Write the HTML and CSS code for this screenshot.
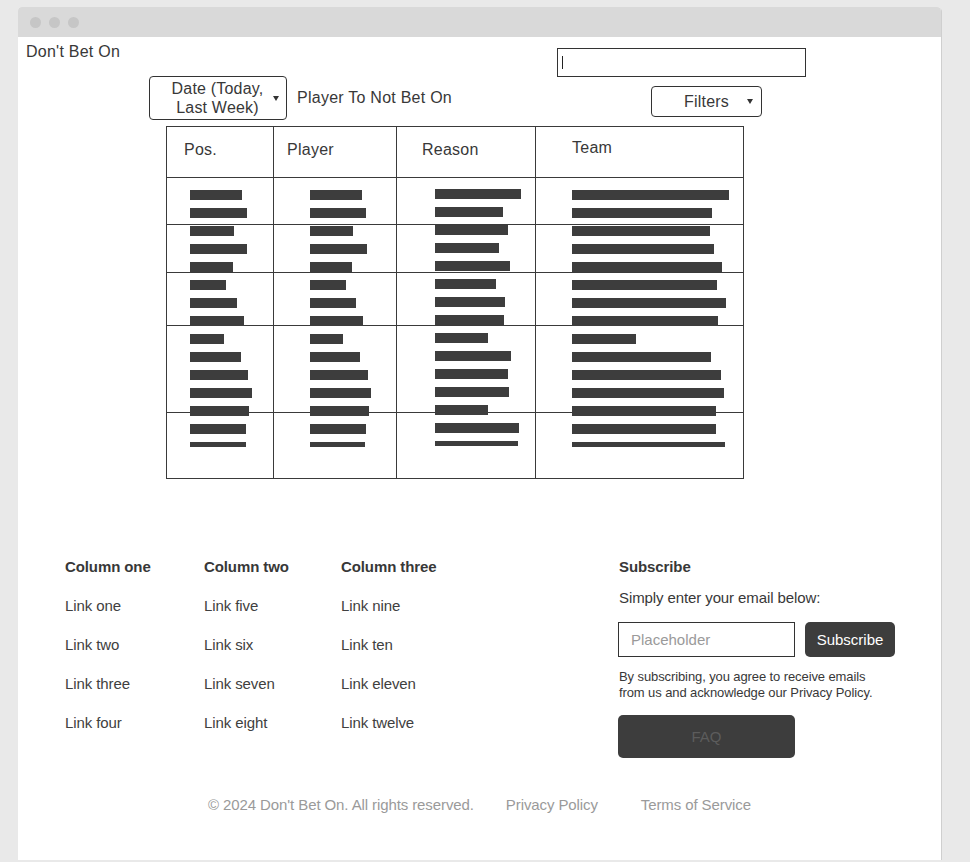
FILE: index.html
```html
<!DOCTYPE html>
<html lang="en">
<head>
  <meta charset="UTF-8">
  <title>Don't Bet On</title>
  <link rel="stylesheet" href="styles.css">
</head>
<body>
  <div class="window">
    <div class="titlebar">
      <span class="dot"></span>
      <span class="dot"></span>
      <span class="dot"></span>
    </div>

    <div class="top-row">
      <div class="brand">Don't Bet On</div>
      <div class="search"><span class="caret"></span></div>
    </div>

    <div class="filter-row">
      <div class="select date-select">
        <span class="select-text">Date (Today,<br>Last Week)</span>
        <span class="arrow"></span>
      </div>
      <div class="label">Player To Not Bet On</div>
      <div class="select filters-select">
        <span>Filters</span>
        <span class="arrow"></span>
      </div>
    </div>

    <div class="table">
      <div class="table-head">
        <div class="cell col-pos">Pos.</div>
        <div class="cell col-player">Player</div>
        <div class="cell col-reason">Reason</div>
        <div class="cell col-team">Team</div>
      </div>
      <div class="table-body">
        <div class="cell col-pos">
          <span class="bar" style="width:52px"></span>
          <span class="bar" style="width:57px"></span>
          <span class="bar" style="width:44px"></span>
          <span class="bar" style="width:57px"></span>
          <span class="bar" style="width:43px"></span>
          <span class="bar" style="width:36px"></span>
          <span class="bar" style="width:47px"></span>
          <span class="bar" style="width:54px"></span>
          <span class="bar" style="width:34px"></span>
          <span class="bar" style="width:51px"></span>
          <span class="bar" style="width:58px"></span>
          <span class="bar" style="width:62px"></span>
          <span class="bar" style="width:59px"></span>
          <span class="bar" style="width:56px"></span>
          <span class="bar thin" style="width:56px"></span>
        </div>
        <div class="cell col-player">
          <span class="bar" style="width:52px"></span>
          <span class="bar" style="width:56px"></span>
          <span class="bar" style="width:43px"></span>
          <span class="bar" style="width:57px"></span>
          <span class="bar" style="width:42px"></span>
          <span class="bar" style="width:36px"></span>
          <span class="bar" style="width:46px"></span>
          <span class="bar" style="width:53px"></span>
          <span class="bar" style="width:33px"></span>
          <span class="bar" style="width:50px"></span>
          <span class="bar" style="width:58px"></span>
          <span class="bar" style="width:61px"></span>
          <span class="bar" style="width:59px"></span>
          <span class="bar" style="width:56px"></span>
          <span class="bar thin" style="width:55px"></span>
        </div>
        <div class="cell col-reason">
          <span class="bar" style="width:86px"></span>
          <span class="bar" style="width:68px"></span>
          <span class="bar" style="width:73px"></span>
          <span class="bar" style="width:64px"></span>
          <span class="bar" style="width:75px"></span>
          <span class="bar" style="width:61px"></span>
          <span class="bar" style="width:70px"></span>
          <span class="bar" style="width:69px"></span>
          <span class="bar" style="width:53px"></span>
          <span class="bar" style="width:76px"></span>
          <span class="bar" style="width:73px"></span>
          <span class="bar" style="width:74px"></span>
          <span class="bar" style="width:53px"></span>
          <span class="bar" style="width:84px"></span>
          <span class="bar thin" style="width:83px"></span>
        </div>
        <div class="cell col-team">
          <span class="bar" style="width:157px"></span>
          <span class="bar" style="width:140px"></span>
          <span class="bar" style="width:138px"></span>
          <span class="bar" style="width:142px"></span>
          <span class="bar" style="width:150px"></span>
          <span class="bar" style="width:145px"></span>
          <span class="bar" style="width:154px"></span>
          <span class="bar" style="width:146px"></span>
          <span class="bar" style="width:64px"></span>
          <span class="bar" style="width:139px"></span>
          <span class="bar" style="width:149px"></span>
          <span class="bar" style="width:152px"></span>
          <span class="bar" style="width:144px"></span>
          <span class="bar" style="width:144px"></span>
          <span class="bar thin" style="width:153px"></span>
        </div>
      </div>
    </div>

    <footer class="footer">
      <div class="footer-cols">
        <div class="footer-col">
          <h4>Column one</h4>
          <a>Link one</a>
          <a>Link two</a>
          <a>Link three</a>
          <a>Link four</a>
        </div>
        <div class="footer-col">
          <h4>Column two</h4>
          <a>Link five</a>
          <a>Link six</a>
          <a>Link seven</a>
          <a>Link eight</a>
        </div>
        <div class="footer-col">
          <h4>Column three</h4>
          <a>Link nine</a>
          <a>Link ten</a>
          <a>Link eleven</a>
          <a>Link twelve</a>
        </div>
        <div class="subscribe">
          <h4>Subscribe</h4>
          <p class="sub-intro">Simply enter your email below:</p>
          <div class="sub-form">
            <input class="sub-input" type="text" placeholder="Placeholder">
            <button class="sub-btn">Subscribe</button>
          </div>
          <p class="sub-note">By subscribing, you agree to receive emails<br>from us and acknowledge our Privacy Policy.</p>
          <button class="faq-btn">FAQ</button>
        </div>
      </div>

      <div class="legal">
        <span>© 2024 Don't Bet On. All rights reserved.</span>
        <a class="privacy">Privacy Policy</a>
        <a class="terms">Terms of Service</a>
      </div>
    </footer>
  </div>
</body>
</html>
```

FILE: styles.css
```css
body {
  margin: 0;
  padding: 7px 0 0 18px;
  background-color: #e9e9e9;
  font-family: "Liberation Sans", Arial, sans-serif;
  color: #383838;
}
.window {
  width: 923px;
  background-color: #fff;
  border-radius: 4px 4px 0 0;
  box-shadow: 1px 1px 0 #cfcfcf;
  padding-bottom: 45px;
}
.titlebar {
  height: 30px;
  background-color: #d9d9d9;
  border-radius: 4px 4px 0 0;
  display: flex;
  align-items: center;
  gap: 8px;
  padding-left: 12px;
}
.dot {
  width: 11px;
  height: 11px;
  border-radius: 50%;
  background-color: #c6c6c6;
}

/* top bar */
.top-row {
  display: grid;
  grid-template-columns: 539px 249px;
  height: 39px;
}
.brand {
  padding: 5px 0 0 8px;
  font-size: 16px;
  line-height: 20px;
  letter-spacing: 0.25px;
}
.search {
  margin-top: 11px;
  height: 29px;
  box-sizing: border-box;
  border: 1px solid #333;
  display: flex;
  align-items: center;
  padding-left: 4px;
}
.caret {
  width: 1px;
  height: 13px;
  background-color: #222;
}
.filter-row {
  display: flex;
  align-items: flex-start;
  padding-left: 131px;
  padding-right: 179px;
}
.select {
  box-sizing: border-box;
  border: 1px solid #333;
  border-radius: 4px;
  display: flex;
  align-items: center;
  font-size: 16px;
  letter-spacing: 0.2px;
}
.date-select {
  width: 138px;
  height: 44px;
  padding-left: 18px;
}
.select-text {
  width: 99px;
  text-align: center;
  line-height: 19px;
}
.date-select .arrow {
  margin-left: 6px;
}
.arrow {
  width: 0;
  height: 0;
  border-left: 3px solid transparent;
  border-right: 3px solid transparent;
  border-top: 5px solid #333;
}
.label {
  margin: 12px 0 0 10px;
  font-size: 16px;
  line-height: 20px;
  letter-spacing: 0.25px;
}
.filters-select {
  margin-left: auto;
  margin-top: 10px;
  width: 111px;
  height: 31px;
  padding-left: 32px;
}
.filters-select .arrow {
  margin-left: 18px;
}

/* table */
.table {
  width: 578px;
  box-sizing: border-box;
  margin: 6px 0 0 148px;
  border: 1px solid #3a3a3a;
}
.table-head, .table-body {
  display: grid;
  grid-template-columns: 106px 123px 139px 208px;
}
.table-head {
  height: 50px;
  border-bottom: 1px solid #3a3a3a;
  font-size: 16px;
  line-height: 20px;
  letter-spacing: 0.25px;
}
.cell {
  box-sizing: border-box;
}
.cell + .cell {
  border-left: 1px solid #3a3a3a;
}
.table-head .cell {
  padding-top: 13px;
}
.table-head .col-pos { padding-left: 17px; }
.table-head .col-player { padding-left: 13px; }
.table-head .col-reason { padding-left: 25px; }
.table-head .col-team { padding-left: 36px; padding-top: 11px; }

.table-body {
  height: 300px;
  background-image:
    linear-gradient(#3a3a3a, #3a3a3a),
    linear-gradient(#3a3a3a, #3a3a3a),
    linear-gradient(#3a3a3a, #3a3a3a),
    linear-gradient(#3a3a3a, #3a3a3a);
  background-size: 100% 1px;
  background-repeat: no-repeat;
  background-position: 0 46px, 0 94px, 0 147px, 0 234px;
}
.table-body .cell {
  display: flex;
  flex-direction: column;
  align-items: flex-start;
  gap: 8px;
  padding-top: 12px;
}
.table-body .col-pos { padding-left: 23px; }
.table-body .col-player { padding-left: 36px; }
.table-body .col-reason { padding-left: 38px; padding-top: 11px; }
.table-body .col-team { padding-left: 36px; }
.bar {
  display: block;
  height: 10px;
  background-color: #3d3d3d;
}
.bar.thin {
  height: 5px;
}

/* footer */
.footer {
  margin-top: 78px;
  letter-spacing: -0.1px;
}
.footer-cols {
  display: grid;
  grid-template-columns: 139px 137px 278px 1fr;
  padding-left: 47px;
}
.footer-col {
  display: flex;
  flex-direction: column;
  gap: 19px;
  font-size: 15px;
  line-height: 20px;
}
.footer h4 {
  margin: 0;
  font-size: 15px;
  line-height: 20px;
  font-weight: bold;
}
.footer-col a {
  color: #404040;
}
.subscribe {
  font-size: 15px;
}
.sub-intro {
  margin: 11px 0 0;
  line-height: 20px;
}
.sub-form {
  display: flex;
  gap: 10px;
  margin: 14px 0 0 -1px;
}
.sub-input {
  width: 177px;
  height: 35px;
  box-sizing: border-box;
  border: 1px solid #333;
  padding: 0 12px;
  font-family: inherit;
  font-size: 15px;
}
.sub-input::placeholder {
  color: #9a9a9a;
}
.sub-btn {
  width: 90px;
  height: 35px;
  border: none;
  border-radius: 5px;
  background-color: #3d3d3d;
  color: #fff;
  font-family: inherit;
  font-size: 15px;
}
.sub-note {
  margin: 12px 0 0;
  font-size: 13px;
  line-height: 16px;
}
.faq-btn {
  display: block;
  margin: 14px 0 0 -1px;
  width: 177px;
  height: 43px;
  border: none;
  border-radius: 5px;
  background-color: #3d3d3d;
  color: #5c5c5c;
  font-family: inherit;
  font-size: 15px;
}
.legal {
  display: flex;
  justify-content: center;
  margin-top: 37px;
  font-size: 15px;
  line-height: 20px;
  color: #9a9a9a;
}
.privacy {
  margin-left: 32px;
}
.terms {
  margin-left: 43px;
}
```
